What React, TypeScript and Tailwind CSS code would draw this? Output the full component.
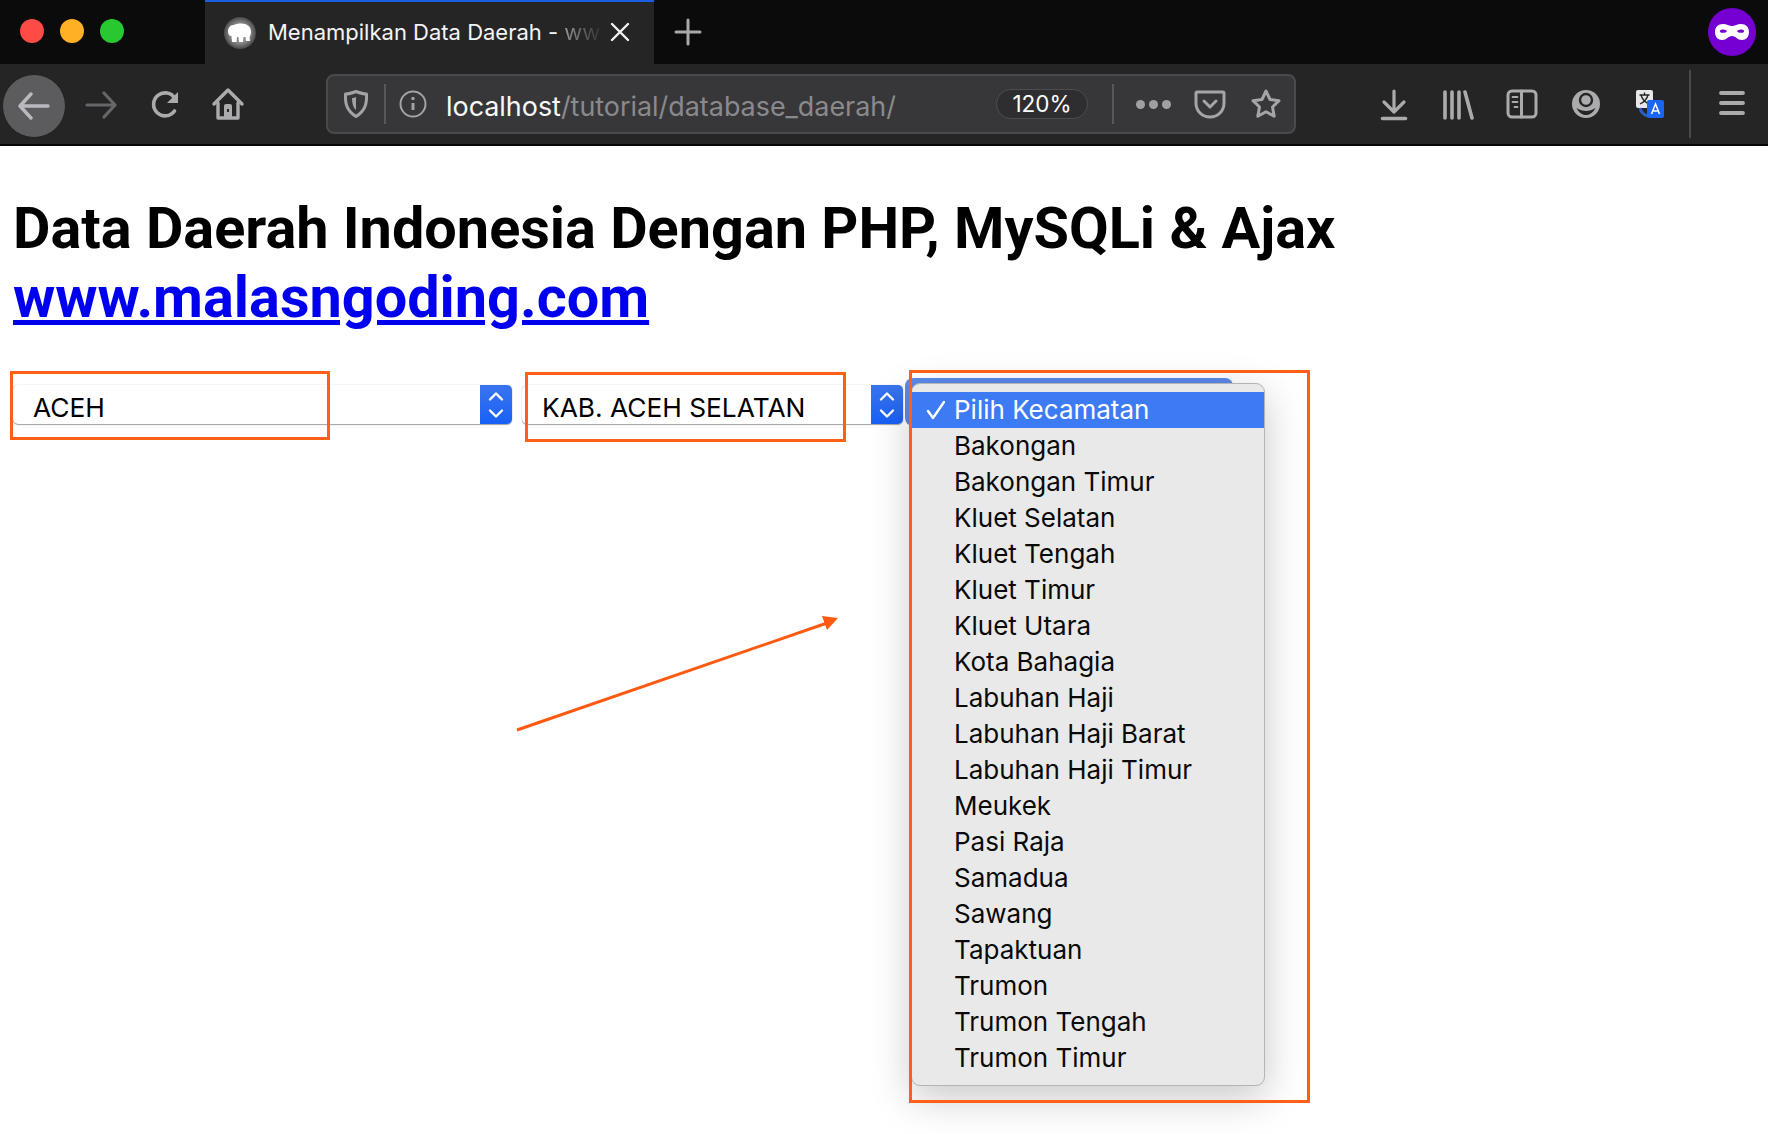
import React from "react";

const kecamatan = ["Bakongan","Bakongan Timur","Kluet Selatan","Kluet Tengah","Kluet Timur","Kluet Utara","Kota Bahagia","Labuhan Haji","Labuhan Haji Barat","Labuhan Haji Timur","Meukek","Pasi Raja","Samadua","Sawang","Tapaktuan","Trumon","Trumon Tengah","Trumon Timur"];

const inter = "font-['Inter','Liberation_Sans',sans-serif]";

function Ic({ w = 32, h = 32, vb = "0 0 32 32", children, className = "" }: { w?: number; h?: number; vb?: string; children: React.ReactNode; className?: string }) {
  return (
    <svg width={w} height={h} viewBox={vb} fill="none" stroke="currentColor" strokeLinecap="round" strokeLinejoin="round" className={"block " + className}>
      {children}
    </svg>
  );
}

function Spinner() {
  return (
    <div className="flex h-[39px] w-8 flex-col items-center justify-center rounded-r-[5px] bg-gradient-to-b from-[#3a74ee] to-[#1760f6]">
      <svg width="18" height="30" viewBox="0 0 18 30" fill="none" stroke="white" strokeWidth="2.4" strokeLinecap="round" strokeLinejoin="round">
        <path d="M3 9.5 9 3.5l6 6" />
        <path d="M3 20.5l6 6 6-6" />
      </svg>
    </div>
  );
}

function Select({ label, width }: { label: string; width: string }) {
  return (
    <div className={"flex h-[39px] items-stretch rounded-[5px] bg-white shadow-[0_1px_1px_rgba(0,0,0,0.35),0_0_1px_rgba(0,0,0,0.35)] " + width}>
      <div className={"flex flex-1 items-center pl-[20px] pt-[6px] text-[26.3px] text-black " + inter}>{label}</div>
      <Spinner />
    </div>
  );
}

export default function App() {
  return (
    <div className="relative h-[1134px] w-[1768px] overflow-hidden bg-white">
      {/* Tab strip */}
      <div className="flex h-16 items-stretch bg-[#0b0b0c]">
        <div className="flex w-[205px] items-start gap-[16px] pl-5 pt-[19px]">
          <span className="h-6 w-6 rounded-full bg-[#ff4b45]" />
          <span className="h-6 w-6 rounded-full bg-[#ffb024]" />
          <span className="h-6 w-6 rounded-full bg-[#28c831]" />
        </div>
        <div className="relative flex w-[449px] items-center border-t-2 border-[#1a5fe0] bg-[#252526] pl-[19px] pb-[1px]">
          <svg width="32" height="32" viewBox="0 0 32 32" className="block">
            <defs>
              <radialGradient id="fav">
                <stop offset="0.6" stopColor="#8c8c8c" />
                <stop offset="1" stopColor="#4a4a4a" />
              </radialGradient>
            </defs>
            <circle cx="16" cy="16" r="16" fill="url(#fav)" />
            <path d="M4 14c0-3 2-6 6-6 2-1 4-1.500 7-1.500 6 0 10 3 10 8 0 2-.5 4-1.500 5.500l.5 4h-4l-.5-4h-2l-.5 5h-4l-.5-5h-1.500l-.5 5H8l-.5-6C5 19 4 17 4 14z" fill="#fff" />
          </svg>
          <span className={"ml-[12px] flex w-[333px] overflow-hidden whitespace-pre text-[22px] text-[#f4f4f5] " + inter}>
            Menampilkan Data Daerah - <span className="bg-gradient-to-r from-[#999] to-[#333] bg-clip-text text-transparent">ww</span>
          </span>
          <svg width="20" height="20" viewBox="0 0 20 20" className="absolute left-[405px] top-[20px] block" stroke="#f2f2f2" strokeWidth="2.4" strokeLinecap="round">
            <path d="M2 2l16 16M18 2 2 18" />
          </svg>
        </div>
        <div className="flex w-[68px] items-center justify-center pb-[1px]">
          <svg width="28" height="28" viewBox="0 0 28 28" stroke="#a8a8aa" strokeWidth="3" strokeLinecap="round" className="block">
            <path d="M14 2v24M2 14h24" />
          </svg>
        </div>
        <div className="flex-1" />
        <div className="flex w-[60px] items-center">
          <div className="flex h-12 w-12 items-center justify-center rounded-full bg-[#7500d1]">
            <svg width="34" height="18" viewBox="0 0 34 18">
              <path fillRule="evenodd" fill="#fff" d="M8 1c4 0 6 2 9 2s5-2 9-2c5 0 8 3 8 8s-3 8-7 8c-5 0-6-4-10-4s-5 4-10 4c-4 0-7-3-7-8s3-8 8-8zm-.5 5.500C5.500 6.500 4.500 7.500 5 9c2 1.500 6 1 7-1-1-1-3-1.500-4.500-1.500zm19 0c-1.500 0-3.500.5-4.500 1.500 1 2 5 2.500 7 1 .5-1.500-.5-2.500-2.500-2.500z" />
            </svg>
          </div>
        </div>
      </div>

      {/* Toolbar */}
      <div className="flex h-[82px] items-start border-b-2 border-[#060606] bg-[#252526] pt-[10px] text-[#ababad]">
        <div className="ml-[2px] flex h-16 w-16 items-center justify-center rounded-full border border-[#222] bg-[#5c5c5e] text-[#b9b9c0]">
          <Ic w={34} h={28} vb="0 0 34 28">
            <path d="M3 14h28M14 2 3 14l11 12" strokeWidth="3.4" />
          </Ic>
        </div>
        <div className="ml-[18px] mt-[17px] text-[#66666a]">
          <Ic w={34} h={28} vb="0 0 34 28">
            <path d="M3 14h28M20 2l11 12-11 12" strokeWidth="3.2" />
          </Ic>
        </div>
        <div className="ml-[32px] mt-[15px]">
          <Ic w={32} h={32}>
            <path d="M24.500 22a11.500 11.500 0 1 1 .5-12.500" strokeWidth="3.600" />
            <path d="M28 3v11H17z" fill="currentColor" stroke="none" />
          </Ic>
        </div>
        <div className="ml-[29px] mt-[13px]">
          <Ic w={34} h={34} vb="0 0 34 34">
            <path d="M3 17 17 3l14 14" strokeWidth="3.400" />
            <path d="M7 16v15h20V16" strokeWidth="3.400" />
            <rect x="13" y="17" width="8" height="14" rx="2" fill="currentColor" stroke="none" />
            <rect x="16" y="22" width="2" height="3" fill="#252526" stroke="none" />
          </Ic>
        </div>

        {/* URL bar */}
        <div className="ml-[81px] flex h-[60px] w-[970px] items-center rounded-[8px] border-2 border-[#4a4a4d] bg-[#37373a]">
          <div className="ml-[15px] text-[#a3a3a6]">
            <Ic w={26} h={30} vb="0 0 26 30">
              <path d="M13 2.500c4 1.500 7 2.500 10.500 2.500 .5 10-1.500 17-10.500 22.500C4 22 2 15 2.500 5 6 5 9 4 13 2.500z" strokeWidth="3" />
              <path d="M9 9c1.500 0 3-.5 4-1v13c-2.500-2-4-6-4-12z" fill="currentColor" stroke="none" />
            </Ic>
          </div>
          <div className="ml-[15px] h-10 w-[2px] bg-[#58585b]" />
          <div className="ml-[13px] text-[#a3a3a6]">
            <Ic w={28} h={28} vb="0 0 28 28">
              <circle cx="14" cy="14" r="12.500" strokeWidth="2" />
              <path d="M14 13v7" strokeWidth="3" strokeLinecap="butt" />
              <circle cx="14" cy="8.500" r="1.700" fill="currentColor" stroke="none" />
            </Ic>
          </div>
          <div className={"ml-[19px] w-[550px] whitespace-nowrap pt-[4px] text-[26.9px] text-[#f8f8f8] " + inter}>
            localhost<span className="text-[#8a8a8d]">/tutorial/database_daerah/</span>
          </div>
          <div className={"flex h-[30px] w-[92px] items-center justify-center rounded-full border border-[#4d4d50] bg-[#2e2e31] text-[22.5px] text-white " + inter}>
            120%
          </div>
          <div className="ml-[24px] h-10 w-[2px] bg-[#58585b]" />
          <div className="ml-[22px] flex gap-[4px]">
            <span className="h-[9px] w-[9px] rounded-full bg-[#a0a0a3]" />
            <span className="h-[9px] w-[9px] rounded-full bg-[#a0a0a3]" />
            <span className="h-[9px] w-[9px] rounded-full bg-[#a0a0a3]" />
          </div>
          <div className="ml-[23px] text-[#a5a5a8]">
            <Ic w={32} h={30} vb="0 0 32 30">
              <path d="M3 3h26a1 1 0 0 1 1 1v10c0 8-6 14-14 14S2 22 2 14V4a1 1 0 0 1 1-1z" strokeWidth="3" />
              <path d="M10 12l6 6 6-6" strokeWidth="3" />
            </Ic>
          </div>
          <div className="ml-[24px] text-[#a5a5a8]">
            <Ic w={32} h={32}>
              <path d="M16 3l4 8.500 9 1.200-6.500 6.300 1.700 9.200L16 23.700l-8.200 4.500L9.500 19 3 12.700l9-1.200z" strokeWidth="3" />
            </Ic>
          </div>
        </div>

        {/* Right side */}
        <div className="ml-[84px] mt-[15px]">
          <Ic w={28} h={32} vb="0 0 28 32">
            <path d="M14 2v20M4 13l10 10 10-10" strokeWidth="3.200" />
            <path d="M2.500 29.500h23" strokeWidth="3.600" />
          </Ic>
        </div>
        <div className="ml-[34px] mt-[15px]">
          <Ic w={32} h={32}>
            <path d="M3 3v26M10 3v26M17 3v26M23 3l7 26" strokeWidth="3.600" />
          </Ic>
        </div>
        <div className="ml-[32px] mt-[15px]">
          <Ic w={32} h={30} vb="0 0 32 30">
            <rect x="2" y="2" width="28" height="26" rx="4" strokeWidth="3" />
            <path d="M15.500 2v26" strokeWidth="3" />
            <path d="M6.500 8h5M6.500 13h5M8.500 18h3" strokeWidth="1.800" />
          </Ic>
        </div>
        <div className="ml-[33px] mt-[15px]">
          <svg width="30" height="30" viewBox="0 0 30 30" className="block">
            <circle cx="15" cy="15" r="14" fill="#ababad" />
            <circle cx="15" cy="11" r="6" fill="#ababad" stroke="#252526" strokeWidth="2.400" />
            <path d="M5.500 19c3 5.500 6.500 7 9.500 7s6.500-1.500 9.500-7c-3 2-6.500 3-9.500 3s-6.500-1-9.500-3z" fill="#252526" />
          </svg>
        </div>
        <div className="ml-[34px] mt-[15px]">
          <svg width="30" height="30" viewBox="0 0 30 30" className="block">
            <rect x="1" y="1" width="17" height="18" rx="2" fill="#e8e8e8" />
            <path d="M4.500 6h10M9.500 3.500V6M6 6c1 4 4 7 8 9M13 6c-1 4-4 7-8 9" stroke="#222" strokeWidth="1.300" fill="none" />
            <path d="M5 19c1 4 3 7 8 8" stroke="#2a5fc8" strokeWidth="3" fill="none" />
            <rect x="12" y="11" width="17" height="18" rx="2" fill="#1a66f2" />
            <path d="M16.500 25l4-10 4 10M18 22h5" stroke="#fff" strokeWidth="1.500" fill="none" />
          </svg>
        </div>
        <div className="ml-[24px] -mt-[4px] h-[68px] w-[2px] bg-[#4a4a4c]" />
        <div className="ml-[28px] mt-[16px]">
          <Ic w={26} h={26} vb="0 0 26 26">
            <path d="M2 3h22M2 13h22M2 23h22" strokeWidth="3.800" />
          </Ic>
        </div>
      </div>

      {/* Page */}
      <main className="font-['Roboto','Liberation_Sans',sans-serif]">
        <h1 className="ml-[13px] mt-[48px] text-[57.6px] font-bold leading-[69px] text-black">
          Data Daerah Indonesia Dengan PHP, MySQLi &amp; Ajax
          <br />
          <a className="text-[#0000ee] underline" href="#">www.malasngoding.com</a>
        </h1>
        <div className="ml-[13px] mt-[53px] flex items-start">
          <Select label="ACEH" width="w-[499px]" />
          <div className="w-[10px]" />
          <Select label="KAB. ACEH SELATAN" width="w-[381px]" />
          <div className="-mt-[7px] ml-[2px] h-[48px] w-[328px] rounded-[8px] bg-[#5b8aea]" />
        </div>
      </main>

      {/* Open dropdown */}
      <div className={"absolute left-[911px] top-[383px] h-[703px] w-[354px] rounded-[9px] border border-[#b4b4b6] bg-[#e9e9e9] pt-[8px] text-[26px] leading-[36px] text-[#0a0a0a] shadow-[0_12px_40px_rgba(0,0,0,0.22)] " + inter}>
        <div className="relative h-9 bg-[#3d7bf5] pl-[42px] text-white">
          <svg width="20" height="20" viewBox="0 0 20 20" fill="none" stroke="#fff" strokeWidth="2.400" strokeLinecap="round" strokeLinejoin="round" className="absolute left-[14px] top-[8px]">
            <path d="M2 11l5 7L18 2" />
          </svg>
          Pilih Kecamatan
        </div>
        {kecamatan.map((k) => (
          <div key={k} className="h-9 pl-[42px]">{k}</div>
        ))}
      </div>

      {/* Annotations */}
      <div className="absolute left-[10px] top-[371px] h-[69px] w-[320px] border-[3px] border-[#ff5f17]" />
      <div className="absolute left-[525px] top-[372px] h-[70px] w-[321px] border-[3px] border-[#ff5f17]" />
      <div className="absolute left-[909px] top-[370px] h-[733px] w-[401px] border-[3px] border-[#ff5f17]" />
      <svg width="340" height="130" viewBox="0 0 340 130" className="absolute left-[510px] top-[610px]">
        <path d="M7 120 320 12" stroke="#ff5a10" strokeWidth="3" />
        <path d="M328 8 312 6l5 14z" fill="#ff5a10" />
      </svg>
    </div>
  );
}
